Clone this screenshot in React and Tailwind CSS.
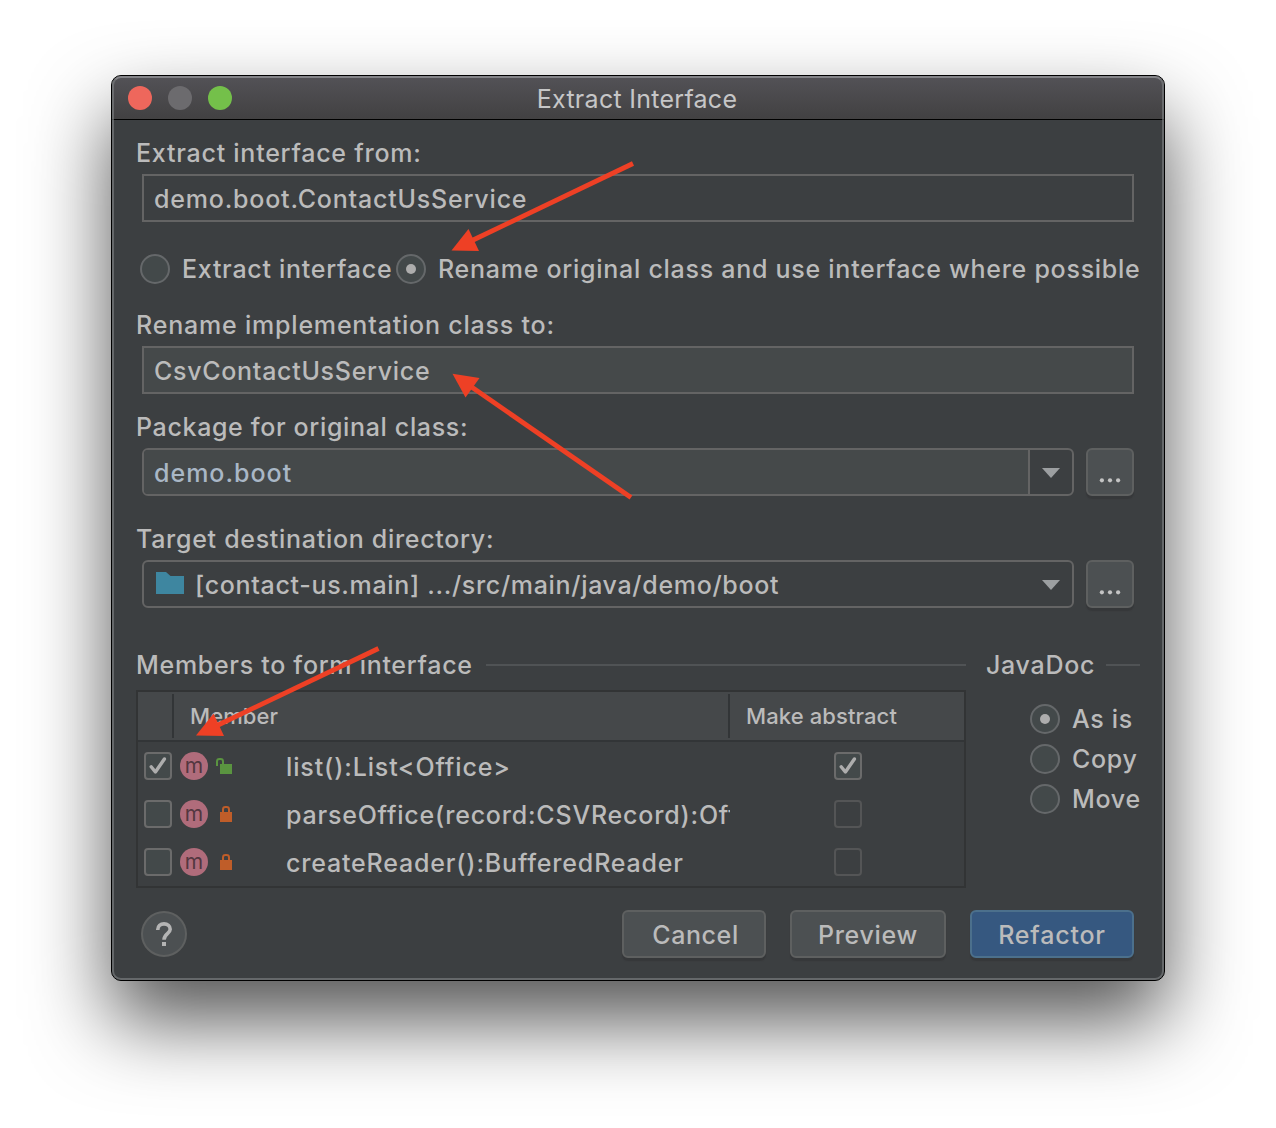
function Radio({ checked }) {
  return (
    <span className="flex size-[30px] shrink-0 items-center justify-center rounded-full border-2 border-[#65686a] bg-[#43494a]">
      {checked && <span className="size-[10px] rounded-full bg-[#adadad]" />}
    </span>
  );
}

function Check({ checked, disabled }) {
  return (
    <span
      className={
        disabled
          ? "block size-7 shrink-0 rounded-[4px] border-2 border-[#545556]"
          : "block size-7 shrink-0 rounded-[4px] border-2 border-[#6b6b6b] bg-[#43494a]"
      }
    >
      {checked && (
        <svg viewBox="0 0 24 24" className="size-6" fill="none">
          <path d="M5.2 12.8 L9.4 18 L18.4 5" stroke="#adadad" strokeWidth="3.4" strokeLinecap="round" strokeLinejoin="round" />
        </svg>
      )}
    </span>
  );
}

function Caret() {
  return (
    <svg viewBox="0 0 18 10" className="mt-[2px] h-[10px] w-[18px]">
      <path d="M0 0H18L9 10Z" fill="#9c9fa1" />
    </svg>
  );
}

function More() {
  return (
    <button className="flex h-12 w-12 items-center justify-center rounded-[6px] border-2 border-[#5e6060] bg-[#4c5052] shadow-[0_3px_1px_#36383a]">
      <svg viewBox="0 0 44 44" className="size-11" fill="#c4c4c4">
        <circle cx="13.9" cy="30.3" r="2.1" />
        <circle cx="22" cy="30.3" r="2.1" />
        <circle cx="30.1" cy="30.3" r="2.1" />
      </svg>
    </button>
  );
}

function Method() {
  return (
    <span className="flex size-7 shrink-0 items-center justify-center rounded-full bg-[#b06c7b] text-[21px] font-normal leading-7 tracking-normal text-[#533740]">
      <span>m</span>
    </span>
  );
}

function Lock({ open }) {
  return (
    <svg viewBox="0 0 18 18" className="mt-[2px] h-[18px] w-[18px] shrink-0">
      {open ? (
        <>
          <path d="M1 8V3.4Q1 1 3.5 1H4.5Q7 1 7 3.4V7" fill="none" stroke="#5a9440" strokeWidth="2" />
          <rect x="4" y="6" width="12" height="10" fill="#5a9440" />
        </>
      ) : (
        <>
          <path d="M7 7V3.4Q7 1 9.5 1H10.5Q13 1 13 3.4V7" fill="none" stroke="#bf5d29" strokeWidth="2" />
          <rect x="4" y="6" width="12" height="10" fill="#bf5d29" />
        </>
      )}
    </svg>
  );
}

function Member({ label, spacing, on, open }) {
  return (
    <div className="flex h-12 items-center">
      <div className="flex w-[148px] items-center pl-[6px]">
        <Check checked={on} />
        <span className="ml-2"><Method /></span>
        <span className="ml-2"><Lock open={open} /></span>
      </div>
      <div className={`w-[444px] overflow-hidden whitespace-nowrap pt-[2px] ${spacing}`}>{label}</div>
      <div className="flex flex-1 justify-center pl-[2px]">
        <Check checked={on} disabled={!on} />
      </div>
    </div>
  );
}

function Arrow({ x1, y1, x2, y2, head }) {
  return (
    <g>
      <line x1={x1} y1={y1} x2={x2} y2={y2} stroke="#ee4025" strokeWidth="4.8" />
      <polygon points={head} fill="#ee4025" />
    </g>
  );
}

const label = "flex h-[30px] items-center";

export default function App() {
  return (
    <div className="relative h-[1128px] w-[1276px] overflow-hidden bg-white font-['Inter',sans-serif] text-[25px] font-[450] leading-[30px] tracking-[0.7px] text-[#bbbbbb]">
      <div className="relative ml-[111px] mt-[75px] h-[906px] w-[1054px] rounded-[10px] border border-black bg-[#3c3f41] shadow-[0_40px_80px_rgba(0,0,0,0.67)]">
        <div className="grid h-[44px] grid-cols-[1fr_auto_1fr] items-center rounded-t-[9px] border-b border-black bg-linear-to-b from-[#535257] to-[#424142] px-4">
          <div className="flex gap-4">
            <span className="size-6 rounded-full bg-[#ee675c]" />
            <span className="size-6 rounded-full bg-[#6c6b6e]" />
            <span className="size-6 rounded-full bg-[#74c04a]" />
          </div>
          <h1 className="pr-[2px] pt-[2px] font-normal tracking-[0.28px] text-[#c6c6c7]">Extract Interface</h1>
        </div>

        <div className="pl-6 pr-6 pt-[18px]">
          <div className={`${label} tracking-[0.75px]`}>Extract interface from:</div>
          <div className="mx-[6px] mt-[6px] flex h-12 items-center border-2 border-[#646464] pl-[10px] pt-[2px] tracking-[0.8px]">demo.boot.ContactUsService</div>

          <div className="mt-8 flex h-[30px] items-center whitespace-nowrap pl-1">
            <Radio />
            <span className="ml-3 w-[214px] shrink-0 tracking-[0.72px]">Extract interface</span>
            <Radio checked />
            <span className="ml-3 tracking-[0.73px]">Rename original class and use interface where possible</span>
          </div>

          <div className={`mt-[26px] ${label} tracking-[0.8px]`}>Rename implementation class to:</div>
          <div className="mx-[6px] mt-[6px] flex h-12 items-center border-2 border-[#646464] bg-[#45494a] pl-[10px] pt-[2px]">CsvContactUsService</div>

          <div className={`mt-[18px] ${label} tracking-[0.65px]`}>Package for original class:</div>
          <div className="mx-[6px] mt-[6px] flex h-12 gap-3">
            <div className="flex flex-1 overflow-hidden rounded-[6px] border-2 border-[#646464]">
              <div className="flex flex-1 items-center bg-[#45494a] pl-[10px] pt-[2px] tracking-[1px] text-[#a9b7c6]">demo.boot</div>
              <div className="flex w-[44px] items-center justify-center border-l-2 border-[#646464]"><Caret /></div>
            </div>
            <More />
          </div>

          <div className={`mt-7 ${label}`}>Target destination directory:</div>
          <div className="mx-[6px] mt-[6px] flex h-12 gap-3">
            <div className="flex flex-1 items-center rounded-[6px] border-2 border-[#646464] pl-3 pr-3">
              <svg viewBox="0 0 28 22" className="mb-[2px] h-[22px] w-7"><path d="M0 0H10L14.5 4H28V22H0Z" fill="#3e86a0" /></svg>
              <span className="ml-[11px] flex-1 pt-[2px] tracking-[0.67px]">[contact-us.main] .../src/main/java/demo/boot</span>
              <Caret />
            </div>
            <More />
          </div>

          <div className="mt-[42px] flex gap-5">
            <div className="w-[830px]">
              <div className={label}>
                Members to form interface
                <span className="ml-[13px] h-[2px] flex-1 bg-[#505355]" />
              </div>
              <div className="mt-[10px] h-[198px] border-2 border-[#323435]">
                <div className="flex h-[50px] items-start border-b-2 border-[#323537] bg-[#45484a] pt-[2px] text-[22px] tracking-[0.1px]">
                  <div className="h-11 w-9 border-r-2 border-[#323537]" />
                  <div className="flex h-11 w-[556px] items-center border-r-2 border-[#323537] pl-4">Member</div>
                  <div className="flex h-11 items-center pl-4">Make abstract</div>
                </div>
                <Member label="list():List<Office>" spacing="tracking-[0.87px]" on open />
                <Member label="parseOffice(record:CSVRecord):Office" spacing="tracking-[0.79px]" />
                <Member label="createReader():BufferedReader" spacing="tracking-[0.82px]" />
              </div>
            </div>
            <div className="w-[154px]">
              <div className={label}>
                JavaDoc
                <span className="ml-[11px] h-[2px] flex-1 bg-[#505355]" />
              </div>
              <div className="mt-6 flex flex-col gap-[10px] pl-11">
                <div className="flex items-center gap-3"><Radio checked />As is</div>
                <div className="flex items-center gap-3"><Radio />Copy</div>
                <div className="flex items-center gap-3"><Radio />Move</div>
              </div>
            </div>
          </div>

          <div className="mt-[22px] flex h-12 items-center pl-[5px] pr-[6px]">
            <button className="mr-auto flex size-[46px] items-center justify-center rounded-full border-2 border-[#5e6060] bg-[#4c5052]">
              <svg viewBox="0 0 16 24" className="h-6 w-4" fill="none" stroke="#b4b4b4" strokeWidth="3.6">
                <path d="M1.8 8V7.6C1.8 4 4.4 1.9 8 1.9C11.6 1.9 14.2 4 14.2 7.3C14.2 11.6 8 12 8 17.8" />
                <path d="M8 20V24" strokeWidth="4" />
              </svg>
            </button>
            <button className="h-12 w-36 rounded-[6px] border-2 border-[#5e6060] bg-[#4c5052] pl-[3px] pt-[2px] tracking-[0.6px] shadow-[0_3px_1px_#36383a]">Cancel</button>
            <button className="ml-6 h-12 w-[156px] rounded-[6px] border-2 border-[#5e6060] bg-[#4c5052] pt-[2px] shadow-[0_3px_1px_#36383a]">Preview</button>
            <button className="ml-6 h-12 w-[164px] rounded-[6px] border-2 border-[#4c708c] bg-[#365880] pt-[2px] tracking-[0.8px] shadow-[0_3px_1px_#36383a]">Refactor</button>
          </div>
        </div>
        <div className="pointer-events-none absolute inset-0 rounded-[9px] border-2 border-[#808486]/60 border-t-[#9a9b9e]/70" />
      </div>

      <svg viewBox="0 0 1276 1128" className="pointer-events-none absolute inset-0 size-full">
        <Arrow x1="633" y1="163.5" x2="470" y2="241.5" head="451.5,250.5 468.5,229 479,251" />
        <Arrow x1="631" y1="497.5" x2="468" y2="384.5" head="452.5,373.8 479.5,378 465.5,397.5" />
        <Arrow x1="378.5" y1="648.5" x2="215" y2="726.5" head="196,735.5 213.5,713.5 224,736" />
      </svg>
    </div>
  );
}
